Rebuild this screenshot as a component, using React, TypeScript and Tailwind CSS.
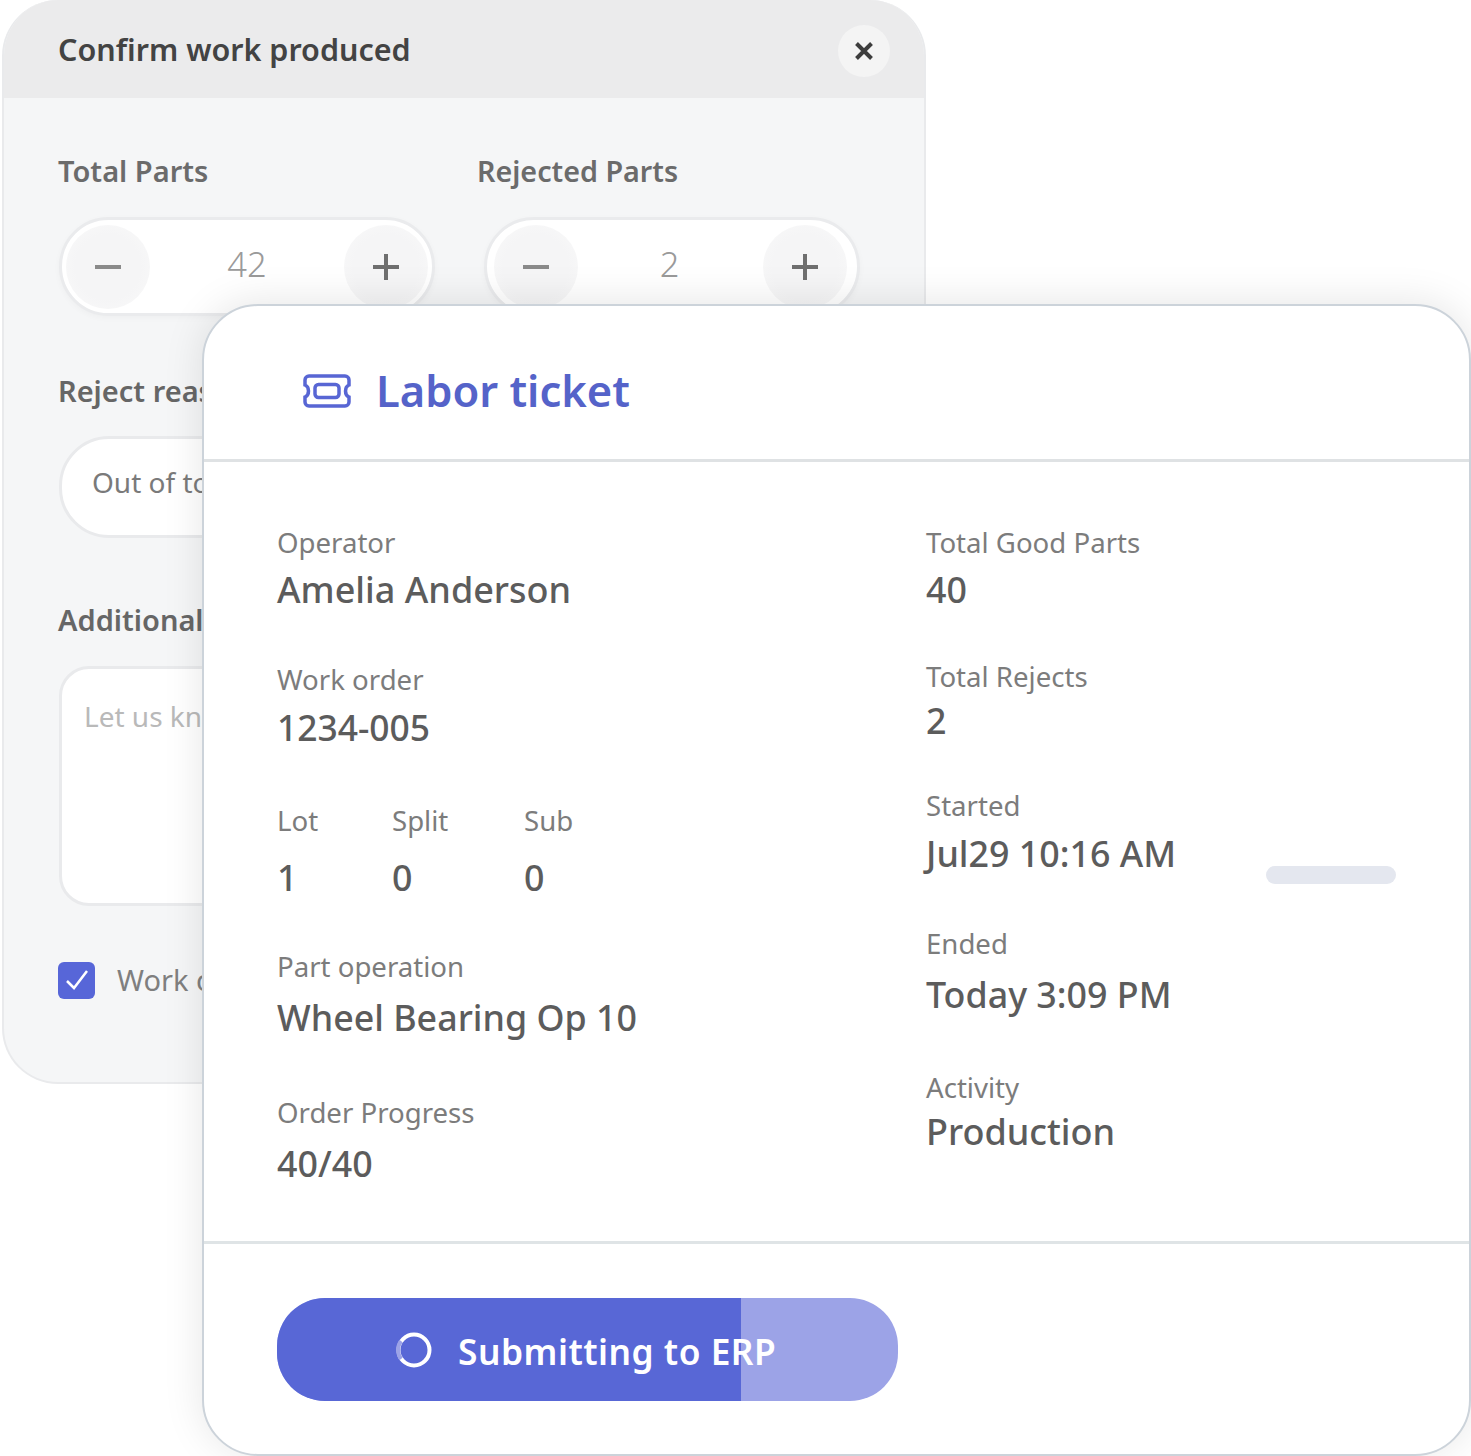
import React from "react";

const font = { fontFamily: '"Noto Sans", sans-serif' };

function RoundBtn({ children }: { children: React.ReactNode }) {
  return (
    <div className="flex h-[84px] w-[84px] items-center justify-center rounded-full bg-[radial-gradient(circle,#f5f5f6_55%,#fafafa_100%)]">
      {children}
    </div>
  );
}

function Stepper({ value, pad, offset }: { value: string; pad: string; offset: string }) {
  return (
    <div className={`flex h-[99px] w-[376px] items-center justify-between rounded-full border-[3px] border-[#eaebed] bg-white shadow-[0_2px_6px_rgba(0,0,0,0.03)] ${pad}`}>
      <RoundBtn>
        <svg width="28" height="6" viewBox="0 0 28 6"><path d="M1 3h26" stroke="#8a8a8a" strokeWidth="4" /></svg>
      </RoundBtn>
      <span className={`text-[34.5px] font-light leading-none text-[#9a9a9a] ${offset}`}>{value}</span>
      <RoundBtn>
        <svg width="28" height="28" viewBox="0 0 28 28"><path d="M1 14h26M14 1v26" stroke="#6f6f6f" strokeWidth="4" /></svg>
      </RoundBtn>
    </div>
  );
}

function Field({
  label,
  value,
  mt = "",
  gap = "",
  size = "text-[35.8px] leading-[46px]",
}: {
  label: string;
  value: string;
  mt?: string;
  gap?: string;
  size?: string;
}) {
  return (
    <div className={mt}>
      <div className="h-[40px] text-[27.6px] leading-[40px] text-[#7c7c7c]">{label}</div>
      <div className={`h-[48px] font-medium text-[#5c5c5c] ${size} ${gap}`}>{value}</div>
    </div>
  );
}

export default function App() {
  return (
    <div className="relative h-[1456px] w-[1471px] overflow-hidden bg-white" style={font}>
      {/* Back dialog */}
      <div className="ml-[2px] h-[1084px] w-[924px] overflow-hidden rounded-[56px] border-2 border-t-0 border-[#e9eaec] bg-[#f5f6f7]">
        <div className="flex h-[98px] items-center justify-between bg-[#ebebec] pl-[54px] pr-[34px]">
          <h1 className="text-[30.5px] font-semibold leading-none text-[#434343]">Confirm work produced</h1>
          <div className="mt-[3px] flex h-[52px] w-[52px] items-center justify-center rounded-full bg-[#f4f4f4]">
            <svg width="20" height="20" viewBox="0 0 20 20"><path d="M2.500 2.500l15 15M17.500 2.500l-15 15" stroke="#3d3d3d" strokeWidth="4" /></svg>
          </div>
        </div>
        <div className="pl-[54px] pt-[51px]">
          <div className="flex gap-[49px]">
            <div>
              <div className="h-[44px] text-[29px] font-semibold leading-[44px] text-[#6b6b6b]">Total Parts</div>
              <div className="ml-[1px] mt-[24px]"><Stepper value="42" pad="px-[4px]" offset="mt-[-4px]" /></div>
            </div>
            <div>
              <div className="ml-[-7px] h-[44px] text-[28.7px] font-semibold leading-[44px] text-[#6b6b6b]">Rejected Parts</div>
              <div className="mt-[24px]"><Stepper value="2" pad="pl-[7px] pr-[10px]" offset="ml-[-2px] mt-[-4px]" /></div>
            </div>
          </div>
          <div className="mt-[53px] h-[44px] whitespace-nowrap text-[29px] font-semibold leading-[44px] text-[#666666]">Reject reason</div>
          <div className="ml-[1px] mt-[23px] flex h-[102px] w-[800px] items-center rounded-[50px] border-[3px] border-[#e9eaec] bg-white pb-[10px] pl-[30px] text-[28px] text-[#7a7a7a]">
            Out of tolerance
          </div>
          <div className="mt-[60px] h-[44px] whitespace-nowrap text-[29px] font-semibold leading-[44px] text-[#666666]">Additional notes</div>
          <div className="ml-[1px] mt-[24px] h-[240px] w-[800px] rounded-[30px] border-[3px] border-[#e9eaec] bg-white pl-[22px] pt-[27px] text-[28px] leading-[40px] text-[#b9b9b9]">
            Let us kn
          </div>
          <div className="mt-[54px] flex items-center gap-[22px]">
            <div className="flex h-[37px] w-[37px] items-center justify-center rounded-[6px] bg-[#5766d8]">
              <svg width="24" height="22" viewBox="0 0 24 22"><path d="M2 12l7 7L22 2" fill="none" stroke="white" strokeWidth="2.500" /></svg>
            </div>
            <span className="whitespace-nowrap text-[29px] leading-[40px] text-[#7f7f7f]">Work c</span>
          </div>
        </div>
      </div>

      {/* Front ticket */}
      <div className="absolute left-[202px] top-[304px] h-[1152px] w-[1269px] overflow-hidden rounded-[56px] border-2 border-[#ccd3da] bg-white shadow-[0_-2px_40px_rgba(0,0,0,0.1)]">
        <div className="flex h-[156px] items-center gap-[25px] border-b-[3px] border-[#dfe2e4] pl-[99px] pt-[16px]">
          <svg width="48" height="34" viewBox="0 0 48 34" fill="none" stroke="#5866d4" strokeWidth="3.500">
            <path d="M6 2h36a4 4 0 0 1 4 4v5c-2.500 1-3.500 3.500-3.500 6s1 5 3.500 6v5a4 4 0 0 1-4 4H6a4 4 0 0 1-4-4v-5c2.500-1 3.500-3.500 3.500-6s-1-5-3.500-6V6a4 4 0 0 1 4-4z" />
            <rect x="12" y="10.500" width="24" height="13" rx="3.500" />
          </svg>
          <span className="text-[43.5px] font-semibold leading-none text-[#5563c9]">Labor ticket</span>
        </div>
        <div className="grid h-[782px] grid-cols-[649px_1fr] border-b-[3px] border-[#dfe4e6] pl-[73px] pt-[60px]">
          <div>
            <Field label="Operator" value="Amelia Anderson" gap="mt-[4px]" size="text-[36px] leading-[48px]" />
            <Field label="Work order" value="1234-005" mt="mt-[45px]" gap="mt-[5px]" size="text-[35.4px] leading-[46px]" />
            <div className="mt-[48px] flex">
              <Field label="Lot" value="1" gap="mt-[14px] w-[115px]" />
              <Field label="Split" value="0" gap="mt-[14px] w-[132px]" />
              <Field label="Sub" value="0" gap="mt-[14px]" />
            </div>
            <Field label="Part operation" value="Wheel Bearing Op 10" mt="mt-[44px]" gap="mt-[8px]" />
            <Field label="Order Progress" value="40/40" mt="mt-[50px]" gap="mt-[8px]" />
          </div>
          <div>
            <Field label="Total Good Parts" value="40" gap="mt-[4px]" />
            <Field label="Total Rejects" value="2" mt="mt-[42px]" gap="mt-[1px]" />
            <div className="mt-[40px]">
              <div className="h-[40px] text-[27.6px] leading-[40px] text-[#7c7c7c]">Started</div>
              <div className="mt-[5px] flex h-[48px]">
                <div className="w-[340px] text-[35.8px] font-medium leading-[46px] text-[#5c5c5c]">Jul29 10:16 AM</div>
                <div className="mt-[36px] h-[18px] w-[130px] rounded-full bg-[#e4e7ef]" />
              </div>
            </div>
            <Field label="Ended" value="Today 3:09 PM" mt="mt-[45px]" gap="mt-[8px]" />
            <Field label="Activity" value="Production" mt="mt-[48px]" gap="mt-[1px]" size="text-[36px] leading-[48px]" />
          </div>
        </div>
        <div className="pl-[73px] pt-[54px]">
          <div className="relative h-[103px] w-[621px] overflow-hidden rounded-[48px] bg-[#9ca3e7]">
            <div className="absolute inset-y-0 left-0 w-[464px] bg-[#5867d6]" />
            <div className="relative flex h-full items-center gap-[26px] pl-[119px]">
              <svg width="36" height="36" viewBox="0 0 36 36" fill="none">
                <circle cx="18" cy="18" r="15.500" stroke="white" strokeWidth="4" />
                <path d="M5 27A15.500 15.500 0 0 1 5 9" stroke="#9ca3e7" strokeWidth="4" />
              </svg>
              <span className="mt-[4px] text-[35.3px] font-semibold leading-none tracking-[0.5px] text-white">Submitting to ERP</span>
            </div>
          </div>
        </div>
      </div>
    </div>
  );
}
